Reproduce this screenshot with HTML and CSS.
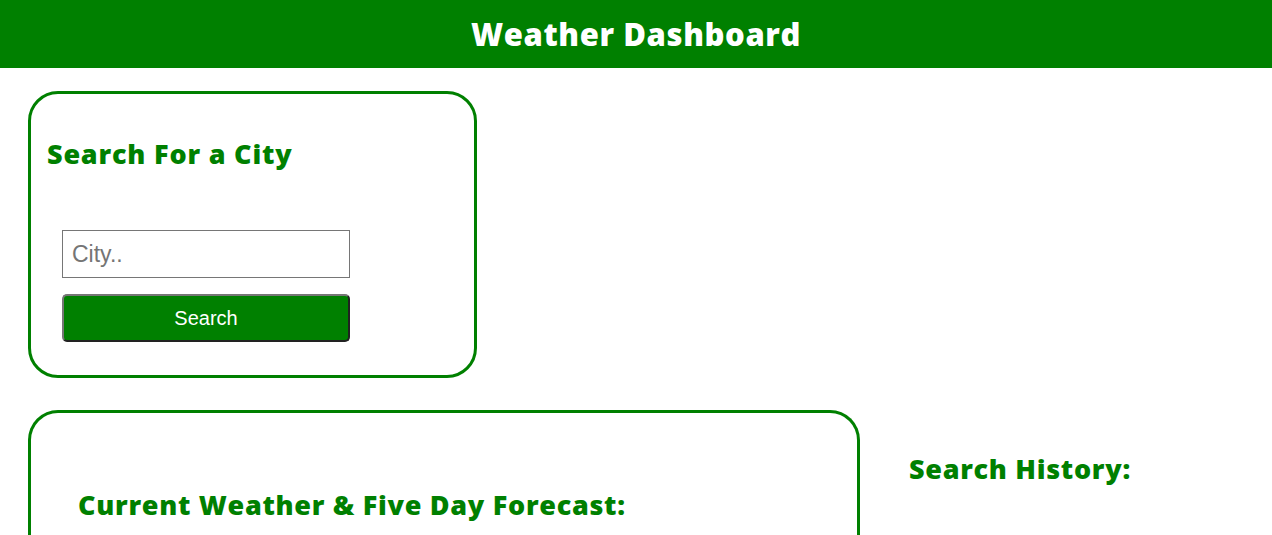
FILE: index.html
```html
<!DOCTYPE html>
<html>
<head>
<meta charset="utf-8">
<link rel="stylesheet" href="styles.css">
</head>
<body>
<header class="topbar"><h1 class="title">Weather Dashboard</h1></header>
<main class="page">
  <section class="card search-card">
    <h2 class="card-title">Search For a City</h2>
    <form class="search-form">
      <input class="city-input" type="text" placeholder="City..">
      <button class="search-btn" type="button">Search</button>
    </form>
  </section>
  <div class="lower">
    <section class="card forecast-card">
      <h2 class="forecast-title">Current Weather &amp; Five Day Forecast:</h2>
    </section>
    <aside class="history">
      <h2 class="history-title">Search History:</h2>
    </aside>
  </div>
</main>
</body>
</html>
```
FILE: styles.css
```css
html, body { margin: 0; padding: 0; background: #fff; }
body { font-family: "Open Sans", "Lato", sans-serif; color: #008000; overflow: hidden; height: 535px; }
.topbar { background: #008000; height: 68px; display: flex; align-items: center; justify-content: center; }
.title { margin: 0; color: #fff; font-weight: 800; font-size: 31px; letter-spacing: 0.6px; }
.page { padding: 23px 0 0 28px; }
.card { border: 3px solid #008000; border-radius: 30px; box-sizing: border-box; }
.search-card { width: 449px; height: 287px; padding: 40px 16px 0 16px; }
.card-title { margin: 0; font-size: 27px; font-weight: 800; line-height: 40px; letter-spacing: 0.8px; }
.search-form { display: flex; flex-direction: column; gap: 16px; width: 288px; margin: 56px 0 0 15px; }
.city-input { box-sizing: border-box; width: 288px; height: 48px; border: 1px solid #767676; padding: 0 9px; font-family: "Liberation Sans", Arial, sans-serif; font-size: 23px; color: #333; outline: none; border-radius: 0; }
.city-input::placeholder { color: #757575; }
.search-btn { box-sizing: border-box; width: 288px; height: 48px; background: #008000; color: #fff; font-family: "Liberation Sans", Arial, sans-serif; font-size: 20px; border: 2px solid; border-color: #767676 #222 #222 #767676; border-radius: 5px; }
.lower { display: flex; margin-top: 32px; }
.forecast-card { width: 832px; height: 200px; padding: 72px 0 0 47px; border-bottom: none; border-bottom-left-radius: 0; border-bottom-right-radius: 0; }
.forecast-title { margin: 0; font-size: 27px; font-weight: 800; line-height: 40px; letter-spacing: 0.7px; }
.history { padding: 39px 0 0 49px; }
.history-title { margin: 0; font-size: 27px; font-weight: 800; line-height: 40px; letter-spacing: 0.7px; }
```
